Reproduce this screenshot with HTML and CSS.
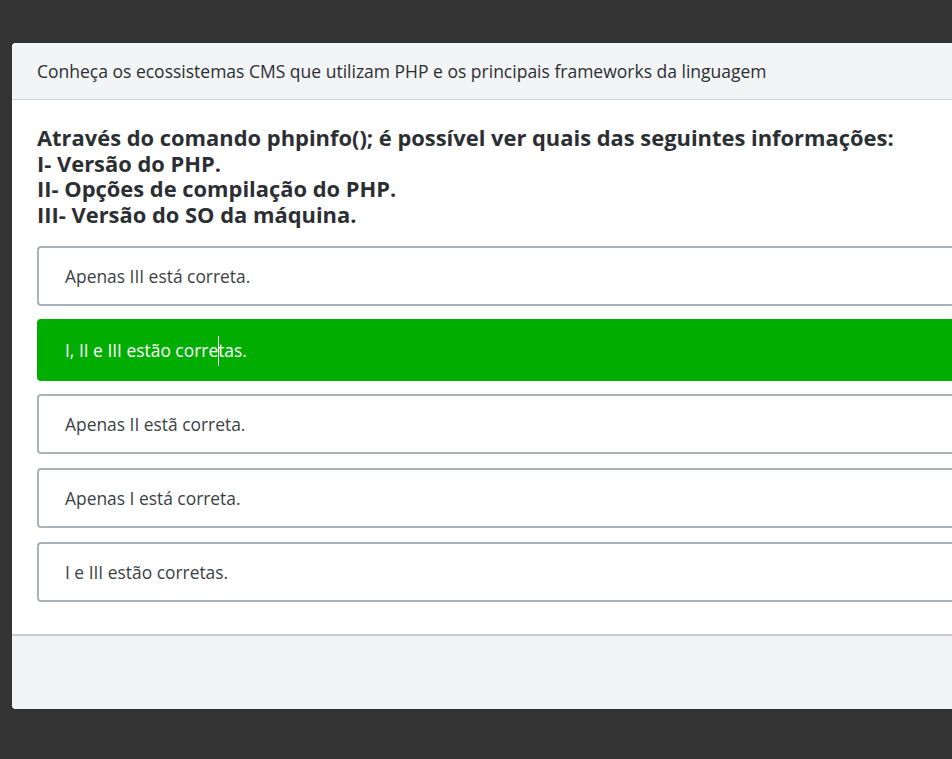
FILE: index.html
```html
<!DOCTYPE html>
<html lang="pt">
<head>
<meta charset="utf-8">
<title>Quiz</title>
<link rel="stylesheet" href="styles.css">
</head>
<body>
<div class="modal">
  <div class="modal-header">Conheça os ecossistemas CMS que utilizam PHP e os principais frameworks da linguagem</div>
  <div class="modal-body">
    <h2 class="question">Através do comando phpinfo(); é possível ver quais das seguintes informações:<br>I- Versão do PHP.<br>II- Opções de compilação do PHP.<br>III- Versão do SO da máquina.</h2>
    <div class="options">
      <div class="option">Apenas III está correta.</div>
      <div class="option correct">I, II e III estão corre<span class="caret-wrap"><span class="caret"></span></span>tas.</div>
      <div class="option">Apenas II estã correta.</div>
      <div class="option">Apenas I está correta.</div>
      <div class="option">I e III estão corretas.</div>
    </div>
  </div>
  <div class="modal-footer"></div>
</div>
</body>
</html>
```
FILE: styles.css
```css
html, body {
  margin: 0;
  padding: 0;
}
body {
  background: #333333;
  overflow: hidden;
  height: 759px;
  font-family: "Open Sans", "Liberation Sans", sans-serif;
}
.modal {
  margin: 43px 0 0 12px;
  width: 1000px;
  background: #ffffff;
  border-radius: 4px 0 0 4px;
  overflow: hidden;
}
.modal-header {
  height: 56px;
  display: flex;
  align-items: center;
  padding: 0 25px;
  background: #f3f4f6;
  border-bottom: 1px solid #d0d3d7;
  font-size: 17.5px;
  color: #2b2f33;
}
.modal-body {
  padding: 25px 25px 32px;
}
.question {
  margin: 0 0 19px;
  font-size: 21.9px;
  line-height: 25.5px;
  font-weight: 700;
  color: #2b2f33;
}
.options {
  display: flex;
  flex-direction: column;
  gap: 14px;
}
.option {
  height: 60px;
  box-sizing: border-box;
  border: 2px solid #aab2ba;
  border-radius: 4px;
  display: flex;
  align-items: center;
  padding: 0 26px;
  font-size: 17.4px;
  color: #3a3f44;
  background: #fff;
}
.option.correct {
  background: #00ad00;
  border-color: #00ad00;
  color: #ffffff;
  height: 62px;
  margin: -1px 0;
}
.caret-wrap {
  position: relative;
  display: inline-block;
  width: 0;
  height: 16px;
}
.caret {
  position: absolute;
  left: 0;
  top: -6px;
  width: 1px;
  height: 30px;
  background: #ffffff;
}
.modal-footer {
  height: 73px;
  background: #f2f3f5;
  border-top: 2px solid #c9ccd0;
}
```
